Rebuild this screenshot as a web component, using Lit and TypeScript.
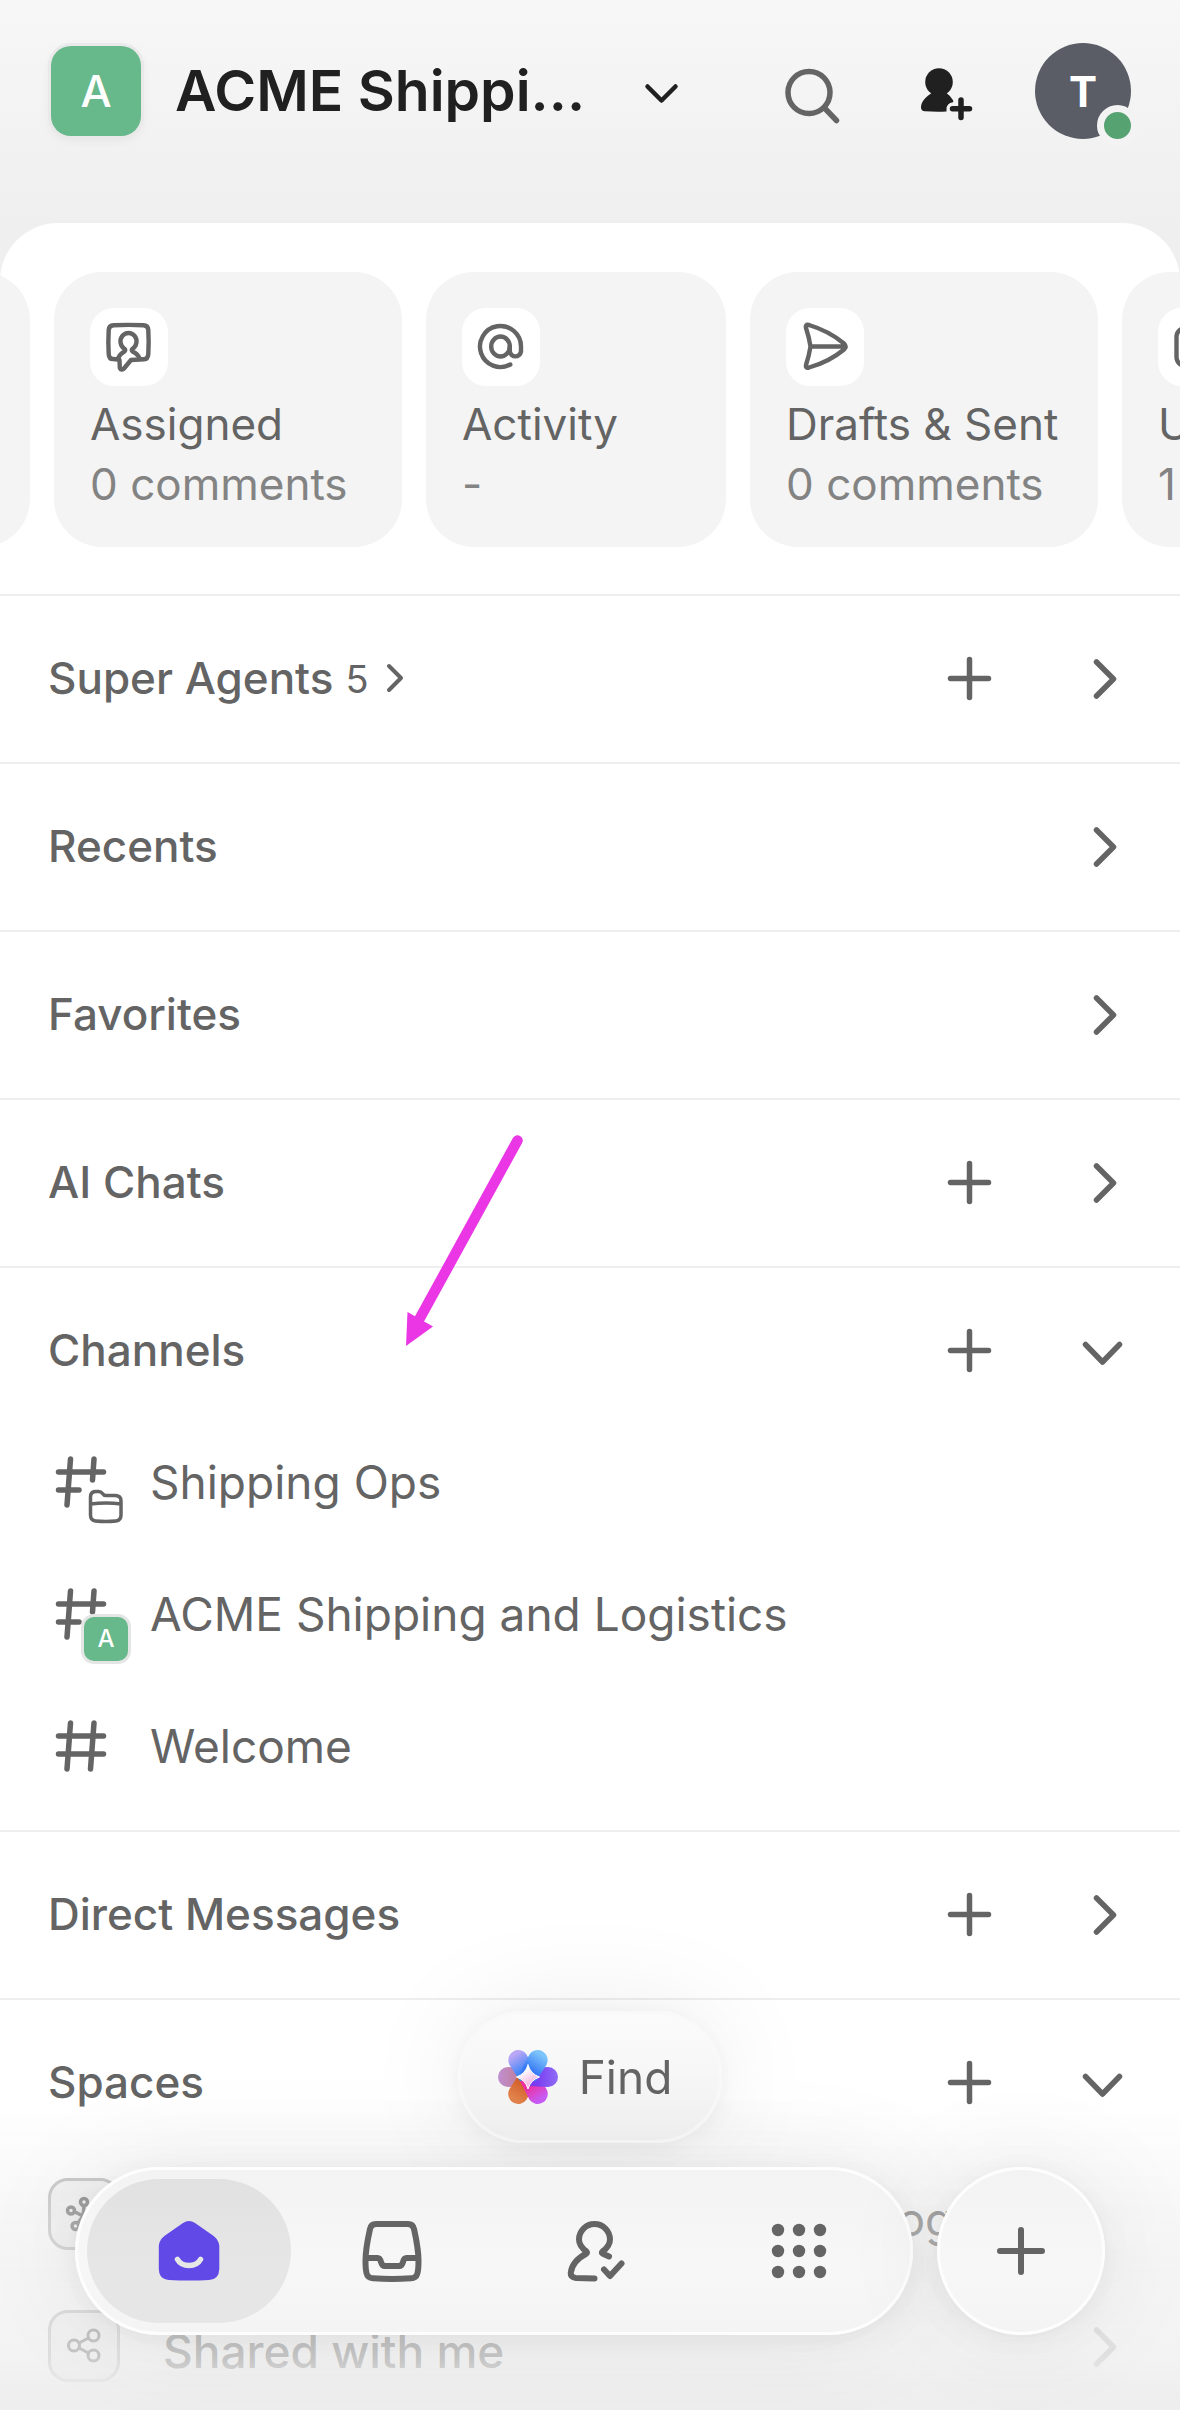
import { LitElement, html, css, svg, nothing, TemplateResult } from "lit";
import { customElement, property, state } from "lit/decorators.js";
import { classMap } from "lit/directives/class-map.js";

const glyphs: Record<string, TemplateResult> = {
  plus: svg`<path d="M30.5 11.5v38M11.5 30.5h38" stroke-width="5.5"/>`,
  right: svg`<path d="M24.5 14l17 17-17 17" stroke-width="5.5"/>`,
  down: svg`<path d="M13.5 24.5l17 17.5 17-17.5" stroke-width="5.5"/>`,
};

const icon = (name: string) =>
  html`<svg class="icon" viewBox="0 0 60 60" aria-hidden="true">${glyphs[name]}</svg>`;

const shared = css`
  * {
    box-sizing: border-box;
  }
  button,
  a {
    font: inherit;
    color: inherit;
    text-decoration: none;
    background: none;
    border: 0;
    padding: 0;
    margin: 0;
    cursor: pointer;
  }
  svg {
    display: block;
    flex: none;
    fill: none;
    stroke: currentColor;
    stroke-linecap: round;
    stroke-linejoin: round;
  }
  .icon {
    width: 60px;
    height: 60px;
  }
`;

@customElement("summary-card")
class SummaryCard extends LitElement {
  @property() label = "";
  @property() detail = "";

  static styles = [
    shared,
    css`
      :host {
        display: block;
        flex: none;
      }
      .card {
        display: flex;
        flex-direction: column;
        align-items: flex-start;
        width: 100%;
        height: 275px;
        padding: 36px;
        border-radius: 48px;
        background: #f4f4f4;
        font-size: 44px;
        line-height: 60px;
        white-space: nowrap;
        text-align: left;
      }
      .tile {
        width: 78px;
        height: 78px;
        margin-bottom: 8px;
        border-radius: 24px;
        background: #fff;
      }
      .detail {
        color: #838383;
      }
    `,
  ];

  render() {
    return html`<a class="card" href="#">
      <span class="tile"><slot></slot></span>
      <span>${this.label}</span>
      <span class="detail">${this.detail}</span>
    </a>`;
  }
}

@customElement("list-section")
class ListSection extends LitElement {
  @property() label = "";
  @property() count = "";
  @property({ type: Boolean }) addable = false;
  @property({ type: Boolean }) open = false;

  static styles = [
    shared,
    css`
      :host {
        display: block;
        position: relative;
        padding: 16px 0 18px;
        border-top: 2px solid #eeeeee;
      }
      .head {
        display: flex;
        align-items: center;
        height: 132px;
        padding: 0 48px;
        gap: 73px;
      }
      .title {
        display: flex;
        align-items: center;
        flex: 1;
        margin: 0;
        font-size: 44px;
        font-weight: 500;
        line-height: 60px;
      }
      .count {
        margin-left: 12px;
        padding-top: 2px;
        font-size: 38px;
        font-weight: 400;
      }
      .more {
        width: 40px;
        height: 40px;
        margin-left: 10px;
      }
    `,
  ];

  render() {
    return html`
      <div class="head">
        <h2 class="title">
          ${this.label}
          ${this.count
            ? html`<span class="count">${this.count}</span>
                <svg class="more" viewBox="0 0 40 40" aria-hidden="true">
                  <path d="M10 8l12 12-12 12" stroke-width="4" />
                </svg>`
            : nothing}
        </h2>
        ${this.addable
          ? html`<button aria-label="Add to ${this.label}">${icon("plus")}</button>`
          : nothing}
        <button
          aria-label="Toggle ${this.label}"
          aria-expanded=${this.open ? "true" : "false"}
          @click=${() => (this.open = !this.open)}
        >
          ${icon(this.open ? "down" : "right")}
        </button>
      </div>
      ${this.open ? html`<slot></slot>` : nothing}
    `;
  }
}

const hashFull = svg`<path d="M22.5 10L19 56M46 10L42.5 56M10.5 23H55.5M10.5 41H55.5" stroke-width="5.5"/>`;
const hashCut = svg`<path d="M22.5 10L19 56M46 10L44.5 31M10.5 23H55.5M10.5 41H31" stroke-width="5.5"/>`;

@customElement("app-root")
class AppRoot extends LitElement {
  @state() private tab = "Home";

  static styles = [
    shared,
    css`
      :host {
        display: flex;
        flex-direction: column;
        height: 100vh;
        overflow: hidden;
        color: #646464;
        background: linear-gradient(#f7f7f7, #efefef 223px);
        font-family: Inter, "Liberation Sans", sans-serif;
      }
      .top {
        display: flex;
        align-items: center;
        flex: none;
        gap: 58px;
        padding: 43px 49px 84px 51px;
        color: #202020;
      }
      .workspace {
        display: flex;
        align-items: center;
        flex: 1;
        min-width: 0;
        margin-right: 20px;
        text-align: left;
      }
      .logo {
        display: grid;
        place-items: center;
        width: 90px;
        height: 90px;
        margin-right: 34px;
        border-radius: 20px;
        background: #67b88b;
        box-shadow: 0 0 0 3px #e9e9e9, 0 3px 12px rgba(0, 0, 0, 0.07);
        color: #fff;
        font-size: 44px;
        font-weight: 500;
      }
      .name {
        flex: 1;
        font-size: 57px;
        font-weight: 600;
        line-height: 72px;
        white-space: nowrap;
      }
      .tool {
        width: 72px;
        height: 72px;
      }
      .search {
        color: #646464;
      }
      .avatar {
        position: relative;
        display: grid;
        place-items: center;
        width: 96px;
        height: 96px;
        border-radius: 50%;
        background: #5b5d66;
        color: #fff;
        font-size: 42px;
        font-weight: 700;
      }
      .status {
        position: absolute;
        right: -7px;
        bottom: -7px;
        width: 41px;
        height: 41px;
        border: 7px solid #f3f3f3;
        border-radius: 50%;
        background: #57a271;
      }
      .sheet {
        flex: 1;
        min-height: 0;
        overflow: auto;
        scrollbar-width: none;
        border-radius: 58px 58px 0 0;
        background: #fff;
      }
      .cards {
        display: flex;
        gap: 24px;
        padding: 49px 0 47px;
        overflow: hidden;
      }
      .wide {
        width: 348px;
      }
      .narrow {
        width: 300px;
      }
      .passed {
        margin-left: -318px;
      }
      .tile-icon {
        width: 78px;
        height: 78px;
        stroke-width: 4.4;
      }
      .row {
        display: flex;
        align-items: center;
        height: 132px;
        padding: 0 48px;
        gap: 36px;
        font-size: 46px;
        line-height: 60px;
        white-space: nowrap;
      }
      .mark {
        position: relative;
        flex: none;
      }
      .hash {
        width: 66px;
        height: 66px;
      }
      .badge {
        position: absolute;
        left: 36px;
        top: 36px;
        width: 44px;
        height: 44px;
      }
      .badge-team {
        display: grid;
        place-items: center;
        border-radius: 10px;
        background: #67b88b;
        box-shadow: 0 0 0 3px #e4e6e5;
        color: #fff;
        font-size: 24px;
        font-weight: 500;
        line-height: 30px;
      }
      .space {
        gap: 43px;
      }
      .space-icon {
        width: 72px;
        height: 72px;
        border: 3px solid #b8b8b8;
        border-radius: 20px;
        background: #f2f2f2;
      }
      .space-name {
        flex: 1;
        min-width: 0;
        padding-top: 10px;
      }
      .strong {
        font-weight: 500;
      }
      .quiet {
        opacity: 0.4;
      }
      .arrow {
        position: absolute;
        left: 400px;
        top: -134px;
        width: 130px;
        height: 216px;
      }
      .dock {
        position: fixed;
        left: 0;
        right: 0;
        bottom: 0;
        display: flex;
        flex-direction: column;
        align-items: center;
        gap: 24px;
        padding: 100px 75px 75px;
        background: linear-gradient(
          rgba(238, 238, 238, 0) 190px,
          rgba(238, 238, 238, 0.5) 310px,
          rgba(238, 238, 238, 0.72) 445px,
          #eeeeee 490px
        );
        pointer-events: none;
      }
      .dock > * {
        pointer-events: auto;
      }
      .glass {
        border: 3px solid #fdfdfd;
        background: linear-gradient(#f3f3f3, #f7f7f7 60%, #f4f4f4);
        box-shadow: 0 0 110px rgba(0, 0, 0, 0.08), 0 4px 24px rgba(0, 0, 0, 0.05);
      }
      .find {
        display: flex;
        align-items: center;
        gap: 20px;
        height: 132px;
        padding: 0 47px 0 36px;
        border-radius: 66px;
        background: linear-gradient(#fbfbfb, #f2f2f2);
        border-color: #f9f9f9;
        font-size: 46px;
      }
      .flower {
        width: 62px;
        height: 62px;
      }
      .bar {
        display: flex;
        align-self: stretch;
        gap: 24px;
      }
      .tabs {
        display: flex;
        flex: 1;
        height: 168px;
        padding: 9px;
        border-radius: 84px;
      }
      .tab {
        display: grid;
        place-items: center;
        flex: 1;
        border-radius: 72px;
      }
      .tab-on {
        background: linear-gradient(#e1e1e1, #e6e6e6 60%);
      }
      .tab-icon {
        width: 64px;
        height: 64px;
        stroke-width: 6;
      }
      .create {
        display: grid;
        place-items: center;
        width: 168px;
        height: 168px;
        border-radius: 50%;
      }
      .create-icon {
        width: 64px;
        height: 64px;
      }
    `,
  ];

  private tabs = [
    {
      name: "Home",
      art: svg`<path d="M26 4Q32 0 38 4L56 16.5Q62 21 62.3 27V50Q62 60.5 52 61Q32 62 12 61Q2 60.5 1.8 50V27Q2 21 8 16.5Z" fill="#6149e8" stroke="none"/>
        <path d="M20.5 40.5C25 48.5 39 48.5 43.5 40.5" stroke="#e6e6e6" stroke-width="5.5"/>`,
    },
    {
      name: "Inbox",
      art: svg`<path d="M16 5H48Q53 5 54 10Q58.5 30 58.5 42Q58.5 50 57.5 54Q56.5 59 51 59.3Q32 60.5 13 59.3Q7.5 59 6.5 54Q5.5 50 5.5 42Q5.5 30 10 10Q11 5 16 5Z"/>
        <path d="M6 39H17.5Q20 39 21 43Q22 47 25 47H39Q42 47 43 43Q44 39 46.5 39H58"/>`,
    },
    {
      name: "My Tasks",
      art: svg`<path d="M45 37.5L38.5 34.5Q37.5 33.5 38.5 32.5Q46 27 46 20.5A15.5 15.5 0 0 0 15 20.5Q15 27 22.5 32.5Q23.5 33.5 22.5 34.5C13 39.5 7.5 47 6.7 54Q6.5 58.5 12 59L30.5 59.5"/>
        <path d="M40 50.5L46 57L57.5 44.5"/>`,
    },
    {
      name: "More",
      art: svg`${[11, 32, 53].map((y) =>
        [11, 32, 53].map((x) => svg`<circle cx=${x} cy=${y} r="6.2" fill="currentColor" stroke="none"/>`),
      )}`,
    },
  ];

  private flower() {
    const petals = [
      ["p0", 21.5, 14.5, "#b9a6f5", "#3f86f7"],
      ["p1", 40.5, 14.5, "#7cc4fb", "#3a7bf5"],
      ["p2", 50.5, 31, "#8f6bf6", "#7a3df2"],
      ["p3", 40.5, 47.5, "#c85cf5", "#ee2f9f"],
      ["p4", 21.5, 47.5, "#e2834c", "#d4622c"],
      ["p5", 11.5, 31, "#c08fd0", "#c07f9a"],
    ] as const;
    return html`<svg class="flower" viewBox="0 0 62 62" aria-hidden="true">
      <defs>
        ${petals.map(
          ([id, x, y, a, b]) => svg`<linearGradient id=${id} gradientUnits="userSpaceOnUse"
            x1=${x + (x - 31) * 0.5} y1=${y + (y - 31) * 0.3} x2="31" y2="31">
            <stop offset="0" stop-color=${a}/><stop offset="0.7" stop-color=${b}/></linearGradient>`,
        )}
        <linearGradient id="star" x1="0" y1="0" x2="0.6" y2="1">
          <stop offset="0.3" stop-color="#fff" /><stop offset="1" stop-color="#efa5d8" />
        </linearGradient>
      </defs>
      ${[5, 4, 0, 3, 2, 1].map((i) => {
        const [id, x, y] = petals[i];
        return svg`<path d=${this.petal(Math.atan2(y - 31, x - 31))} fill="url(#${id})" stroke="none"/>`;
      })}
      <path
        d="M31 19Q33.5 28 42.5 31Q33.5 34 31 43Q28.5 34 19.5 31Q28.5 28 31 19Z"
        fill="url(#star)"
        stroke="#ffffff"
        stroke-width="1"
      />
    </svg>`;
  }

  private petal(angle: number) {
    const at = (along: number, across: number) => {
      const x = 31 + along * Math.cos(angle) - across * Math.sin(angle);
      const y = 31 + along * Math.sin(angle) + across * Math.cos(angle);
      return `${x.toFixed(1)} ${y.toFixed(1)}`;
    };
    return `M${at(0, -9)}L${at(20, -10)}A10 10 0 0 1 ${at(20, 10)}L${at(0, 9)}Z`;
  }

  render() {
    return html`
      <header class="top">
        <button class="workspace">
          <span class="logo">A</span>
          <span class="name">ACME Shippi...</span>
          <svg class="tool" viewBox="0 0 72 72" aria-hidden="true">
            <path d="M22.5 31.5L36.5 45.5L50.5 31.5" stroke-width="4.5" />
          </svg>
        </button>
        <button class="search" aria-label="Search">
          <svg class="tool" viewBox="0 0 72 72" aria-hidden="true">
            <circle cx="34" cy="37.5" r="21" stroke-width="5.5" />
            <path d="M49.5 53L61.5 65.5" stroke-width="5.5" />
          </svg>
        </button>
        <button aria-label="Invite people">
          <svg class="tool" viewBox="0 0 72 72" aria-hidden="true">
            <circle cx="34" cy="27" r="13.8" fill="currentColor" stroke="none" />
            <path
              d="M26 38.5C19 43 16 48 16 52.5Q16 56 20 56.3Q31 57 41.5 56.5V54.5Q41.5 48 48 47.3Q49 46 47.5 44.5Q45 40.5 42 38.5Q40 36 42 34H26Q28 36 26 38.5Z"
              fill="currentColor"
              stroke="none"
            />
            <path d="M56 45v17.5M47.5 53.8h17" stroke-width="5.5" />
          </svg>
        </button>
        <button class="avatar" aria-label="Account T">T<span class="status"></span></button>
      </header>

      <main class="sheet">
        <nav class="cards" aria-label="Shortcuts">
          <summary-card class="wide passed" aria-hidden="true"></summary-card>
          <summary-card class="wide" label="Assigned" detail="0 comments">
            <svg class="tile-icon" viewBox="0 0 78 78" aria-hidden="true">
              <path d="M28 51.5L23 51Q19 51 18.7 46Q18 34 18.7 22Q19 17.5 23.5 17.3Q38.5 16.5 53.5 17.3Q58 17.5 58.3 22Q59 34 58.3 46Q58 51 54 51.3L41 52L34 60.5Q31 63 29.8 60L29.5 52" />
              <path d="M28 51Q29.5 46 34.5 43.5Q36 42 34.5 40.8A8 8.5 0 1 1 42.5 40.8Q41 42 42.5 43.5Q48 46 50 51" />
            </svg>
          </summary-card>
          <summary-card class="narrow" label="Activity" detail="-">
            <svg class="tile-icon" viewBox="0 0 78 78" aria-hidden="true">
              <ellipse cx="38.5" cy="38.5" rx="9.3" ry="10" />
              <path d="M47.8 38.5V43.5A5.7 6 0 0 0 59 43.5V38.5A20.5 20.5 0 1 0 48.3 56.5" />
            </svg>
          </summary-card>
          <summary-card class="wide" label="Drafts &amp; Sent" detail="0 comments">
            <svg class="tile-icon" viewBox="0 0 78 78" aria-hidden="true">
              <path d="M24.5 38.5Q23 29 20 20Q19 16 23 17Q43 23 58 35.5Q61 38.5 58 41.5Q43 54 23 59.5Q19 60.5 20 57Q23 48 24.5 38.5ZM24.5 38.5H59" />
            </svg>
          </summary-card>
          <summary-card class="wide" label="Unread" detail="1">
            <svg class="tile-icon" viewBox="0 0 78 78" aria-hidden="true">
              <rect x="18.5" y="20" width="42" height="38" rx="9" />
            </svg>
          </summary-card>
        </nav>

        <list-section label="Super Agents" count="5" addable></list-section>
        <list-section label="Recents"></list-section>
        <list-section label="Favorites"></list-section>
        <list-section label="AI Chats" addable></list-section>
        <list-section label="Channels" addable open>
          <a class="row" href="#">
            <span class="mark">
              <svg class="hash" viewBox="0 0 66 66" aria-hidden="true">${hashCut}</svg>
              <svg class="badge" viewBox="0 0 44 44" aria-hidden="true">
                <path d="M6.5 12Q6.5 6.5 12 6.5H14.5Q17 6.5 18.5 8.5Q19.8 10.5 22 10.5H31Q37 10.5 37 16V30Q37 35.5 32 36Q22 37 11.5 36Q6.5 35.5 6.5 30ZM6.5 19Q22 17 37 19" stroke-width="3.5" />
              </svg>
            </span>
            <span>Shipping Ops</span>
          </a>
          <a class="row" href="#">
            <span class="mark">
              <svg class="hash" viewBox="0 0 66 66" aria-hidden="true">${hashCut}</svg>
              <span class="badge badge-team">A</span>
            </span>
            <span>ACME Shipping and Logistics</span>
          </a>
          <a class="row" href="#">
            <span class="mark">
              <svg class="hash" viewBox="0 0 66 66" aria-hidden="true">${hashFull}</svg>
            </span>
            <span>Welcome</span>
          </a>
          <svg class="arrow" viewBox="0 0 130 216" aria-hidden="true">
            <path d="M117.5 6.5L20 184" stroke="#ea36e4" stroke-width="10.5" />
            <path d="M6 212L7.5 178L33 192.5Z" fill="#ea36e4" stroke="none" />
          </svg>
        </list-section>
        <list-section label="Direct Messages" addable></list-section>
        <list-section label="Spaces" addable open>
          <a class="row space" href="#">
            <svg class="space-icon" viewBox="3 3 66 66" stroke-width="3.5" aria-hidden="true">
              <circle cx="23" cy="32.5" r="3.5" /><circle cx="36" cy="24" r="3.5" />
              <circle cx="27.5" cy="48" r="3.5" /><circle cx="49" cy="36" r="3.5" />
              <circle cx="44" cy="49" r="3.5" />
              <path d="M27 34L35 38L36 28M35 38L30 45M35 38L45 37M35 38L42 46" />
            </svg>
            <span class="space-name">All Tasks — ACME Shipping and Logistics</span>
          </a>
          <a class="row space" href="#">
            <svg class="space-icon" viewBox="3 3 66 66" stroke-width="3" aria-hidden="true">
              <circle cx="26" cy="35.5" r="5.5" /><circle cx="45.5" cy="25.5" r="5.5" />
              <circle cx="45.5" cy="45.5" r="5.5" />
              <path d="M31 33L40.5 28M31 38L40.5 43" />
            </svg>
            <span class="space-name strong">Shared with me</span>
            <span class="quiet">${icon("right")}</span>
          </a>
        </list-section>
      </main>

      <div class="dock">
        <button class="find glass">${this.flower()}<span>Find</span></button>
        <div class="bar">
          <nav class="tabs glass" aria-label="Main">
            ${this.tabs.map(
              (t) => html`<button
                class=${classMap({ tab: true, "tab-on": t.name === this.tab })}
                aria-label=${t.name}
                @click=${() => (this.tab = t.name)}
              >
                <svg class="tab-icon" viewBox="0 0 64 64" aria-hidden="true">${t.art}</svg>
              </button>`,
            )}
          </nav>
          <button class="create glass" aria-label="Create">
            <svg class="create-icon" viewBox="0 0 64 64" aria-hidden="true">
              <path d="M32 11v42M11 32h42" stroke-width="6" />
            </svg>
          </button>
        </div>
      </div>
    `;
  }
}
